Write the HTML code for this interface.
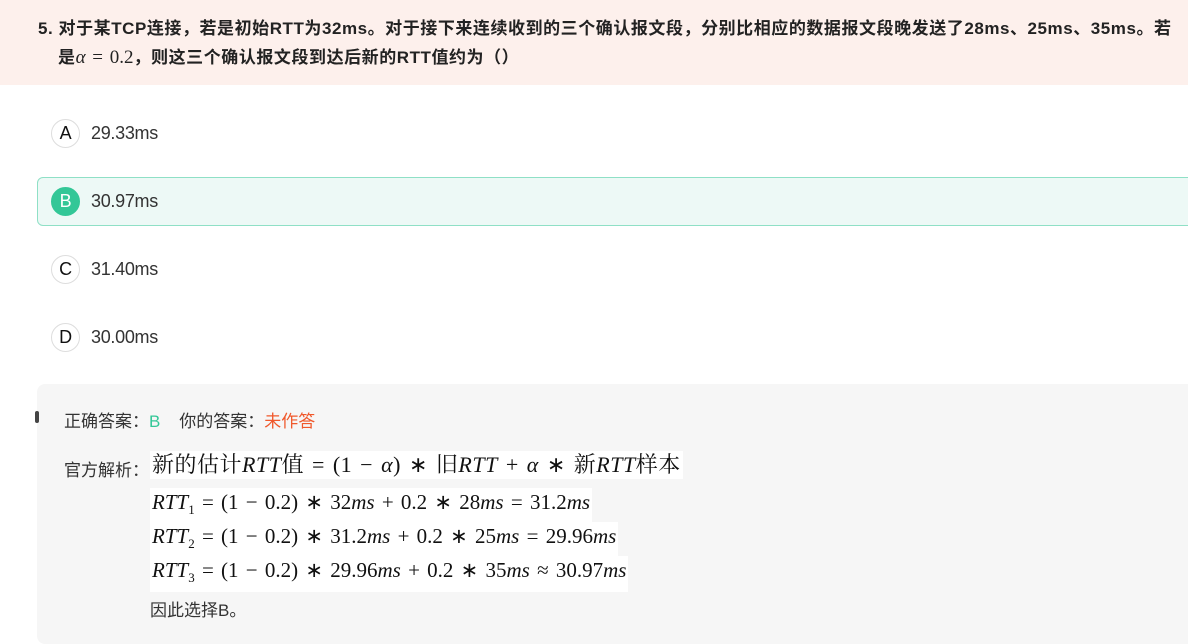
<!DOCTYPE html>
<html><head><meta charset="utf-8"><style>
*{margin:0;padding:0;box-sizing:border-box}
body{width:1188px;height:632px;overflow:hidden;background:#fff;font-family:"Liberation Sans","Noto Sans CJK SC",sans-serif;color:#222;position:relative}
.hdr{position:absolute;left:0;top:0;width:1188px;height:85px;background:#fdf0ec}
.q{position:absolute;left:38px;font-size:17px;letter-spacing:0.55px;font-weight:bold;color:#222;white-space:nowrap}
.m{font-family:"Liberation Serif","Noto Serif CJK SC",serif;font-weight:normal;font-size:19px;word-spacing:2px;letter-spacing:0}
.i{font-style:italic}
.opt{position:absolute;left:51px;height:28px;display:flex;align-items:center;font-size:18px;color:#333;letter-spacing:-0.3px}
.c{width:29px;height:29px;border-radius:50%;border:1px solid #ddd;display:flex;align-items:center;justify-content:center;margin-right:11px;font-size:18px;background:#fff;color:#111}
.sel{position:absolute;left:37px;top:177px;width:1160px;height:49px;border:1px solid #8fe0c6;border-radius:6px;background:#edf9f6}
.panel{position:absolute;left:37px;top:384px;width:1160px;height:260px;background:#f6f6f6;border-radius:8px}
.t{position:absolute;font-size:17px;color:#333;white-space:nowrap}
.mb{position:absolute;left:150px;background:#fff;font-family:"Liberation Serif","Noto Serif CJK SC",serif;font-size:21px;color:#111;white-space:nowrap;padding:0 2px;line-height:28px;word-spacing:2px}
</style></head><body>
<div class="hdr"></div>
<div class="q" style="top:14px">5. 对于某TCP连接，若是初始RTT为32ms。对于接下来连续收到的三个确认报文段，分别比相应的数据报文段晚发送了28ms、25ms、35ms。若</div>
<div class="q" style="top:43px;left:58px">是<span class="m"><span class="i">α</span> = 0.2</span>，则这三个确认报文段到达后新的RTT值约为（）</div>

<div class="opt" style="top:119px"><div class="c">A</div>29.33ms</div>
<div class="sel"></div>
<div class="opt" style="top:187px"><div class="c" style="background:#33c797;border-color:#33c797;color:#fff">B</div>30.97ms</div>
<div class="opt" style="top:255px"><div class="c">C</div>31.40ms</div>
<div class="opt" style="top:323px"><div class="c">D</div>30.00ms</div>

<div class="panel"></div>
<div style="position:absolute;left:35px;top:411px;width:4px;height:12px;background:#444;border-radius:2px"></div>
<div class="t" style="left:64px;top:407px">正确答案：<span style="color:#33c797">B</span>&nbsp;&nbsp;&nbsp;&nbsp;你的答案：<span style="color:#f0582b">未作答</span></div>
<div class="t" style="left:64px;top:456px">官方解析：</div>
<div class="mb" style="top:451px;font-size:22px;letter-spacing:0.5px">新的估计<span class="i">RTT</span>值 = (1 − <span class="i">α</span>) ∗ 旧<span class="i">RTT</span> + <span class="i">α</span> ∗ 新<span class="i">RTT</span>样本</div>
<div class="mb" style="top:488px"><span class="i">RTT</span><sub style="font-size:13px">1</sub> = (1 − 0.2) ∗ 32<span class="i">ms</span> + 0.2 ∗ 28<span class="i">ms</span> = 31.2<span class="i">ms</span></div>
<div class="mb" style="top:522px"><span class="i">RTT</span><sub style="font-size:13px">2</sub> = (1 − 0.2) ∗ 31.2<span class="i">ms</span> + 0.2 ∗ 25<span class="i">ms</span> = 29.96<span class="i">ms</span></div>
<div class="mb" style="top:556px"><span class="i">RTT</span><sub style="font-size:13px">3</sub> = (1 − 0.2) ∗ 29.96<span class="i">ms</span> + 0.2 ∗ 35<span class="i">ms</span> ≈ 30.97<span class="i">ms</span></div>
<div class="t" style="left:150px;top:596px">因此选择B。</div>
</body></html>
